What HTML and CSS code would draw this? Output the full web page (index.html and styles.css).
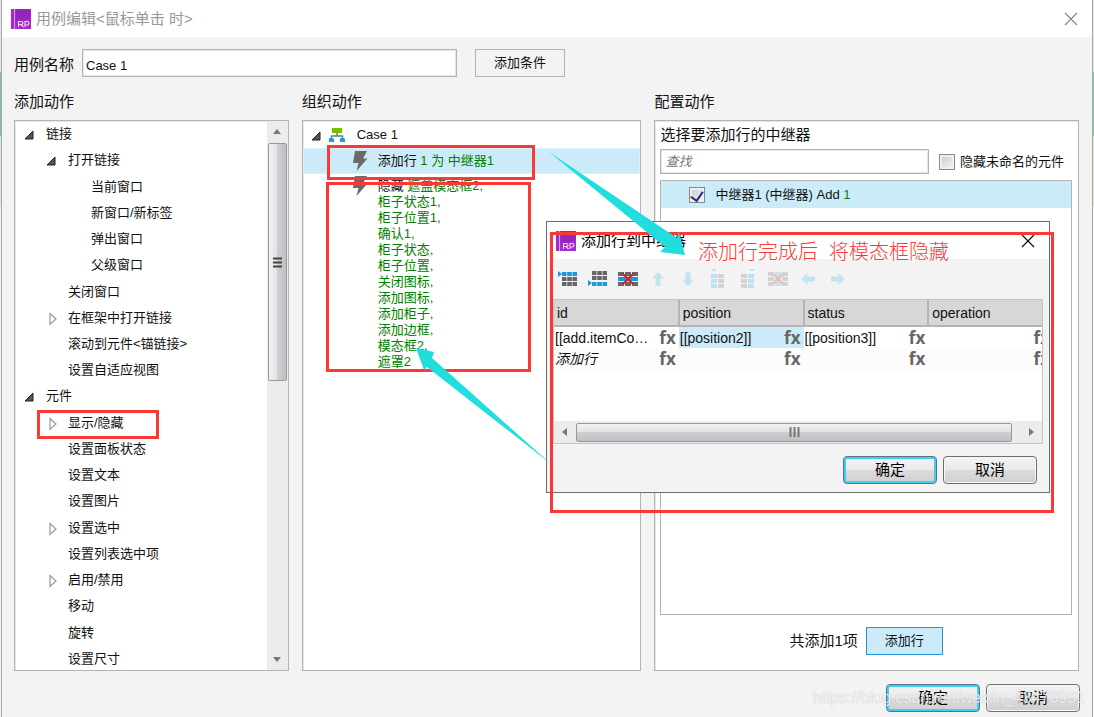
FILE: index.html
```html
<!DOCTYPE html>
<html lang="zh-CN">
<head>
<meta charset="utf-8">
<title>用例编辑</title>
<link rel="stylesheet" href="styles.css">
</head>
<body>
<svg class="defs" width="0" height="0" aria-hidden="true">
  <symbol id="logo" viewBox="0 0 20 20">
    <rect width="20" height="20" fill="#a42acb"/>
    <path d="M5 0H20V9L5 14Z" fill="#9426be"/>
    <rect x="3" width="1" height="20" fill="#d79bea"/>
    <path d="M7.500 18V12.500H10Q12 12.500 12 14T10 15.500H7.500M10 15.500L12.500 18M14 18V12.500H16Q18 12.500 18 14.200T16 16H14" fill="none" stroke="#f0d8f8" stroke-width="1.100"/>
  </symbol>
  <symbol id="open" viewBox="0 0 10 10"><path d="M9 1V9H1Z" fill="#555" stroke="#222"/></symbol>
  <symbol id="shut" viewBox="0 0 10 14"><path d="M2 1.500L8 7L2 12.500Z" fill="#fff" stroke="#999" stroke-width="1.200"/></symbol>
  <symbol id="cross" viewBox="0 0 14 14"><path d="M1 1L13 13M13 1L1 13" fill="none" stroke="currentColor" stroke-width="1.200"/></symbol>
  <symbol id="bolt" viewBox="0 0 16 20"><path d="M3 0H15L11 7.500H15.500L4.500 20L6.500 12H1Z" fill="#6a6a6a"/></symbol>
  <symbol id="case" viewBox="0 0 16 14">
    <path d="M8 5V8M2.500 10V8H13.500V10" fill="none" stroke="#777" stroke-width="1.500"/>
    <rect x="3" width="10" height="5" fill="#76c000"/>
    <path d="M0 10H4L5 11V14H0ZM11 10H15L16 11V14H11Z" fill="#1ba1dc"/>
  </symbol>
  <symbol id="grid-row" viewBox="0 0 15 4"><path d="M0 0H4.500V4H0ZM5.200 0H9.800V4H5.200ZM10.500 0H15V4H10.500Z"/></symbol>
  <symbol id="grid-col" viewBox="0 0 6 14"><path d="M0 0H6V4H0ZM0 5H6V9H0ZM0 10H6V14H0Z"/></symbol>
  <symbol id="arrow" viewBox="0 0 14 14"><path d="M7 0L13 6.500H9.500V14H4.500V6.500H1Z" fill="#c3e3f0"/></symbol>
</svg>

<div class="window">
  <header class="titlebar">
    <svg class="logo"><use href="#logo"/></svg>
    <h1 class="title">用例编辑&lt;鼠标单击 时&gt;</h1>
    <button class="close" aria-label="关闭"><svg><use href="#cross"/></svg></button>
  </header>

  <div class="name-row">
    <label for="case-name">用例名称</label>
    <input id="case-name" class="field name-field" type="text" value="Case 1">
    <button class="flat">添加条件</button>
  </div>

  <main class="columns">
    <section class="column">
      <h2>添加动作</h2>
      <div class="panel tree-panel">
        <ul class="tree">
          <li class="l1"><svg class="open"><use href="#open"/></svg>链接</li>
          <li class="l2"><svg class="open"><use href="#open"/></svg>打开链接</li>
          <li class="l3">当前窗口</li>
          <li class="l3">新窗口/新标签</li>
          <li class="l3">弹出窗口</li>
          <li class="l3">父级窗口</li>
          <li class="l2">关闭窗口</li>
          <li class="l2"><svg class="shut"><use href="#shut"/></svg>在框架中打开链接</li>
          <li class="l2">滚动到元件&lt;锚链接&gt;</li>
          <li class="l2">设置自适应视图</li>
          <li class="l1"><svg class="open"><use href="#open"/></svg>元件</li>
          <li class="l2"><svg class="shut"><use href="#shut"/></svg>显示/隐藏</li>
          <li class="l2">设置面板状态</li>
          <li class="l2">设置文本</li>
          <li class="l2">设置图片</li>
          <li class="l2"><svg class="shut"><use href="#shut"/></svg>设置选中</li>
          <li class="l2">设置列表选中项</li>
          <li class="l2"><svg class="shut"><use href="#shut"/></svg>启用/禁用</li>
          <li class="l2">移动</li>
          <li class="l2">旋转</li>
          <li class="l2">设置尺寸</li>
        </ul>
        <div class="vbar">
          <svg class="vtip" viewBox="0 0 8 5"><path d="M0 5L4 0L8 5Z"/></svg>
          <div class="vthumb"><svg viewBox="0 0 9 11"><path d="M0 1.500H9M0 5.500H9M0 9.500H9" stroke="#444" stroke-width="2"/></svg></div>
          <svg class="vtip vend" viewBox="0 0 8 5"><path d="M0 0L4 5L8 0Z"/></svg>
        </div>
      </div>
    </section>

    <section class="column">
      <h2>组织动作</h2>
      <div class="panel steps">
        <div class="step case"><svg class="open"><use href="#open"/></svg><svg class="case-icon"><use href="#case"/></svg>Case 1</div>
        <div class="step selected"><svg class="bolt"><use href="#bolt"/></svg><p>添加行 <span class="green">1 为 中继器1</span></p></div>
        <div class="step list"><svg class="bolt"><use href="#bolt"/></svg>
          <p>隐藏 <span class="green">遮盖模态框2,<br>柜子状态1,<br>柜子位置1,<br>确认1,<br>柜子状态,<br>柜子位置,<br>关闭图标,<br>添加图标,<br>添加柜子,<br>添加边框,<br>模态框2,<br>遮罩2</span></p>
        </div>
      </div>
    </section>

    <section class="column">
      <h2>配置动作</h2>
      <div class="panel config">
        <h3>选择要添加行的中继器</h3>
        <div class="search-row">
          <input class="field search" type="text" placeholder="查找" aria-label="查找">
          <label class="check"><input type="checkbox">隐藏未命名的元件</label>
        </div>
        <div class="repeaters">
          <label class="check repeater"><input type="checkbox" checked><span>中继器1 (中继器) Add <span class="green">1</span></span></label>
        </div>
        <div class="add-row"><span>共添加1项</span><button class="flat blue">添加行</button></div>
      </div>
    </section>
  </main>

  <footer class="actions">
    <button class="push primary">确定</button>
    <button class="push">取消</button>
  </footer>
</div>

<div class="dialog" role="dialog" aria-labelledby="dialog-title">
  <header class="dialog-title">
    <svg class="logo"><use href="#logo"/></svg>
    <h2 id="dialog-title">添加行到中继器</h2>
    <button class="close dark" aria-label="关闭"><svg><use href="#cross"/></svg></button>
  </header>
  <div class="tools">
    <button aria-label="在上方插入行"><svg viewBox="0 0 20 16"><path d="M0 0L4 3L0 6Z" fill="#1a9ad6"/><use href="#grid-row" x="4" y="1" width="15" height="4" fill="#1a9ad6"/><use href="#grid-row" x="4" y="6" width="15" height="4" fill="#666"/><use href="#grid-row" x="4" y="11" width="15" height="4" fill="#666"/></svg></button>
    <button aria-label="在下方插入行"><svg viewBox="0 0 20 16"><path d="M0 9L4 12L0 15Z" fill="#1a9ad6"/><use href="#grid-row" x="4" y="0" width="15" height="4" fill="#666"/><use href="#grid-row" x="4" y="5" width="15" height="4" fill="#666"/><use href="#grid-row" x="4" y="11" width="15" height="4" fill="#1a9ad6"/></svg></button>
    <button aria-label="删除行"><svg viewBox="0 0 20 16"><path d="M0 1H6V5H0ZM7 1H13V5H7ZM14 1H20V5H14ZM0 11H6V15H0ZM7 11H13V15H7ZM14 11H20V15H14Z" fill="#666"/><path d="M0 6H20V10H0Z" fill="#1a9ad6"/><path d="M5 3L15 13M15 3L5 13" stroke="#e01b1b" stroke-width="2"/></svg></button>
    <button aria-label="上移"><svg class="arrow"><use href="#arrow"/></svg></button>
    <button aria-label="下移"><svg class="arrow down"><use href="#arrow"/></svg></button>
    <button aria-label="在左侧插入列"><svg viewBox="0 0 20 20"><path d="M3 0H9L6 3Z" fill="#c3e3f0"/><use href="#grid-col" x="3" y="5" width="6" height="14" fill="#bfe0ee"/><use href="#grid-col" x="10" y="5" width="6" height="14" fill="#d3d3d3"/></svg></button>
    <button aria-label="在右侧插入列"><svg viewBox="0 0 20 20"><path d="M11 0H17L14 3Z" fill="#c3e3f0"/><use href="#grid-col" x="3" y="5" width="6" height="14" fill="#d3d3d3"/><use href="#grid-col" x="10" y="5" width="6" height="14" fill="#bfe0ee"/></svg></button>
    <button aria-label="删除列"><svg viewBox="0 0 20 16"><path d="M0 1H6V5H0ZM14 1H20V5H14ZM0 6H6V10H0ZM14 6H20V10H14ZM0 11H6V15H0ZM14 11H20V15H14Z" fill="#d3d3d3"/><path d="M7 1H13V15H7Z" fill="#c3e3f0"/><path d="M5 3L15 13M15 3L5 13" stroke="#f3b8b8" stroke-width="2"/></svg></button>
    <button aria-label="左移"><svg class="arrow left"><use href="#arrow"/></svg></button>
    <button aria-label="右移"><svg class="arrow right"><use href="#arrow"/></svg></button>
  </div>
  <div class="grid-box">
    <table class="grid">
      <thead><tr><th>id</th><th>position</th><th>status</th><th>operation</th></tr></thead>
      <tbody>
        <tr><td><div><span>[[add.itemCo…</span><b>fx</b></div></td><td class="picked"><div><span>[[position2]]</span><b>fx</b></div></td><td><div><span>[[position3]]</span><b>fx</b></div></td><td><div><span></span><b>fx</b></div></td></tr>
        <tr class="new"><td><div><i>添加行</i><b>fx</b></div></td><td><div><span></span><b>fx</b></div></td><td><div><span></span><b>fx</b></div></td><td><div><span></span><b>fx</b></div></td></tr>
      </tbody>
    </table>
    <div class="hbar">
      <svg class="htip" viewBox="0 0 5 8"><path d="M5 0L0 4L5 8Z"/></svg>
      <div class="hthumb"><svg viewBox="0 0 11 10"><path d="M1.500 0V10M5.500 0V10M9.500 0V10" stroke="#777" stroke-width="2"/></svg></div>
      <svg class="htip hend" viewBox="0 0 5 8"><path d="M0 0L5 4L0 8Z"/></svg>
    </div>
  </div>
  <footer class="dialog-actions">
    <button class="push primary">确定</button>
    <button class="push">取消</button>
  </footer>
</div>

<svg class="marks" viewBox="0 0 1094 717" aria-hidden="true">
  <g fill="none" stroke="#fc3837" stroke-width="3">
    <rect x="38.500" y="411.500" width="119" height="26"/>
    <rect x="328.500" y="146.500" width="205" height="32"/>
    <rect x="327.500" y="183.500" width="202" height="187"/>
    <rect x="551.500" y="233.500" width="501" height="278"/>
  </g>
  <g fill="#1fdedd">
    <path d="M549 152L677 238L679 232L685 255L660 252L665 247Z"/>
    <path d="M551 464L427 367L424 370L416 348L434 352L432 358Z"/>
  </g>
</svg>
<p class="note">添加行完成后&nbsp; 将模态框隐藏</p>
<p class="watermark">https://blog.csdn.net/weixin_43476931</p>
</body>
</html>
```
FILE: styles.css
```css
* { box-sizing: border-box; }

body {
  margin: 0;
  height: 100vh;
  overflow: hidden;
  position: relative;
  background: linear-gradient(#e4e4e4 72px, #7cc0a8 72px 136px, #d5ecd5 136px 206px, #f3f3f3 206px);
  color: #111;
  font: 13px/16px "Liberation Sans", "Noto Sans CJK SC", sans-serif;
}

h1, h2, h3, p, ul { margin: 0; padding: 0; font-weight: 400; }
ul { list-style: none; }
button, input { font: inherit; color: inherit; }
svg { display: block; flex: none; }
.defs { position: absolute; }
.green { color: #008000; }

.window {
  height: 100%;
  margin: 0 1px;
  border: solid #a8a8a8;
  border-width: 0 1px;
  background: #f3f3f3;
  display: flex;
  flex-direction: column;
}

.titlebar {
  height: 37px;
  flex: none;
  padding: 0 14px 0 9px;
  display: flex;
  align-items: center;
  gap: 5px;
  background: #fff;
}
.logo { width: 20px; height: 20px; }
.title { flex: 1; font-size: 15px; line-height: 20px; color: #999; }
.close { padding: 0; border: 0; background: none; color: #888; }
.close svg { width: 14px; height: 14px; }
.close.dark { color: #111; }

.name-row {
  display: flex;
  align-items: center;
  padding: 12px 12px 0;
  font-size: 15px;
}
.name-row label { width: 68px; padding-top: 4px; }
.field {
  border: 1px solid #b4b4b4;
  box-shadow: inset 0 0 0 1px #e6e6e6;
  background: #fff;
  border-radius: 0;
  outline: 0;
}
.name-field { width: 375px; height: 28px; padding: 4px 3px 0; font-size: 13px; }
.flat {
  height: 28px;
  padding: 0 18px;
  border: 1px solid #b4b4b4;
  background: #f3f3f3;
  font-size: 13px;
}
.name-row .flat { margin-left: 18px; }
.flat.blue { border-color: #1c98db; background: #cbebf8; }

.columns {
  flex: 1;
  min-height: 0;
  padding: 15px 13px 13px 12px;
  display: grid;
  grid-template-columns: 275fr 340fr 425fr;
  gap: 13px;
}
.column { min-width: 0; min-height: 0; display: flex; flex-direction: column; }
.column h2 { height: 28px; font-size: 15px; line-height: 20px; }
.panel {
  flex: 1;
  min-height: 0;
  border: 1px solid #b4b4b4;
  box-shadow: inset 1px 1px 0 #e6e6e6;
  background: #fff;
}

.tree-panel { display: flex; }
.tree { flex: 1; margin-bottom: -2px; display: grid; grid-auto-rows: 1fr; }
.tree li { display: flex; align-items: center; min-height: 0; white-space: nowrap; }
.l1 { padding-left: 31px; }
.l2 { padding-left: 53px; }
.l3 { padding-left: 76px; }
.open { width: 10px; height: 10px; margin: 2px 12px 0 -22px; }
.shut { width: 10px; height: 14px; margin: 2px 10px 0 -20px; }

.vbar {
  width: 21px;
  background: #ececec;
  display: flex;
  flex-direction: column;
  align-items: center;
  padding: 8px 1px;
}
.vtip { width: 8px; height: 5px; fill: #777; }
.vend { margin-top: auto; }
.vthumb {
  width: 19px;
  height: 238px;
  margin-top: 9px;
  border: 1px solid #999;
  border-radius: 2px;
  background: linear-gradient(90deg, #f2f2f2, #e2e3e4 45%, #cdced1 50%, #bfc0c4);
  display: grid;
  place-items: center;
}
.vthumb svg { width: 9px; height: 11px; }

.step { display: flex; align-items: center; height: 26px; padding-left: 49px; }
.case { height: 27px; padding-left: 30px; }
.case-icon { width: 16px; height: 14px; margin: 0 12px 0 -4px; }
.selected { background: #cbebf8; box-shadow: inset 0 0 0 1px #daf1fb; }
.bolt { width: 16px; height: 20px; margin-right: 10px; }
.list { align-items: flex-start; height: auto; padding-top: 4px; }
.list .bolt { margin-top: -2px; }

.config { display: flex; flex-direction: column; padding: 4px 6px 15px 5px; }
.config h3 { font-size: 15px; line-height: 20px; }
.search-row { display: flex; align-items: center; gap: 10px; padding-top: 4px; }
.search { flex: 1; min-width: 0; height: 25px; padding: 0 4px; }
.search::placeholder { color: #777; font-style: italic; opacity: 1; }
.check { display: flex; align-items: center; gap: 5px; white-space: nowrap; }
.search-row .check { padding-right: 8px; }
.check input {
  appearance: none;
  width: 16px;
  height: 16px;
  margin: 0;
  border: 1px solid #888;
  background: linear-gradient(135deg, #c5c8cf, #f8f8f8);
  box-shadow: inset 0 0 0 2px #f0f0f0;
  display: grid;
  justify-items: center;
}
.check input:checked::before {
  content: "";
  width: 6px;
  height: 10px;
  margin-top: 1px;
  border: solid #2b2f7e;
  border-width: 0 2px 2px 0;
  transform: rotate(35deg);
}
.repeaters { flex: 1; margin-top: 6px; border: 1px solid #b4b4b4; }
.repeater { height: 27px; padding-left: 28px; gap: 10px; background: #cbebf8; }
.add-row {
  display: flex;
  align-items: center;
  justify-content: center;
  gap: 8px;
  padding-top: 12px;
  font-size: 15px;
}

.actions { display: flex; justify-content: flex-end; gap: 6px; padding: 0 12px 5px 0; }
.push {
  width: 94px;
  height: 28px;
  padding: 0;
  border: 1px solid #707070;
  border-radius: 4px;
  background: linear-gradient(#f3f3f3, #ebebeb 48%, #dcdcdc 52%, #cfcfcf);
  box-shadow: inset 0 0 0 1px #f6f6f6;
  color: #000;
  font-size: 15px;
}
.primary { border-color: #55747f; box-shadow: inset 0 0 0 2px #3fcff3; }

/* Floating dialog */
.dialog {
  position: absolute;
  left: 546px;
  top: 221px;
  width: 504px;
  border: 1px solid #6d6d6d;
  background: #f3f3f3;
}
.dialog-title {
  height: 37px;
  padding: 0 14px 0 9px;
  display: flex;
  align-items: center;
  gap: 5px;
  background: #fff;
}
.dialog-title h2 { flex: 1; font-size: 15px; color: #000; }
.tools { height: 40px; padding: 0 11px; display: flex; align-items: center; gap: 10px; }
.tools button {
  width: 20px;
  height: 20px;
  padding: 0;
  border: 0;
  background: none;
  display: grid;
  place-items: center;
}
.tools svg { width: 20px; }
.tools svg.arrow { width: 14px; height: 14px; }
.down { transform: rotate(180deg); }
.left { transform: rotate(-90deg); }
.right { transform: rotate(90deg); }

.grid-box {
  height: 145px;
  margin: 0 6px;
  border: 1px solid #c4c4c4;
  background: #fff;
  overflow: hidden;
  display: flex;
  flex-direction: column;
}
.grid { width: 500px; table-layout: fixed; border-collapse: collapse; font-size: 14px; }
.grid th {
  height: 26px;
  padding: 0 3px;
  border: solid #b4b4b4;
  border-width: 0 2px 2px 0;
  background: #d7d7d7;
  text-align: left;
  font-weight: 400;
}
.grid td { height: 22px; padding: 0 3px 0 1px; }
.grid td div { display: flex; justify-content: space-between; align-items: center; white-space: nowrap; }
.grid b { color: #666; font: 700 17px/20px "Open Sans", sans-serif; }
.grid .picked { background: #cbebf8; }
.new { background: #fcfcfc; }

.hbar {
  height: 22px;
  margin-top: auto;
  padding: 1px 8px;
  background: #ececec;
  display: flex;
  align-items: center;
}
.htip { width: 5px; height: 8px; fill: #777; }
.hend { margin-left: auto; }
.hthumb {
  width: 436px;
  height: 19px;
  margin-left: 9px;
  border: 1px solid #999;
  border-radius: 2px;
  background: linear-gradient(#f2f2f2, #e2e3e4 45%, #cdced1 50%, #bfc0c4);
  display: grid;
  place-items: center;
}
.hthumb svg { width: 11px; height: 10px; }
.dialog-actions { display: flex; justify-content: flex-end; gap: 6px; padding: 12px 12px 8px 0; }

/* Annotations over the window */
.marks { position: absolute; left: 0; top: 0; width: 1094px; height: 717px; pointer-events: none; }
.note {
  position: absolute;
  left: 698px;
  top: 240px;
  color: #fc3837;
  font-size: 20px;
  line-height: 24px;
  font-weight: 300;
  white-space: nowrap;
}
.watermark {
  position: absolute;
  right: 9px;
  bottom: 9px;
  color: rgba(255, 255, 255, .8);
  text-shadow: 0 0 1px rgba(120, 120, 120, .5);
  font-size: 16px;
  line-height: 20px;
  pointer-events: none;
}
```
